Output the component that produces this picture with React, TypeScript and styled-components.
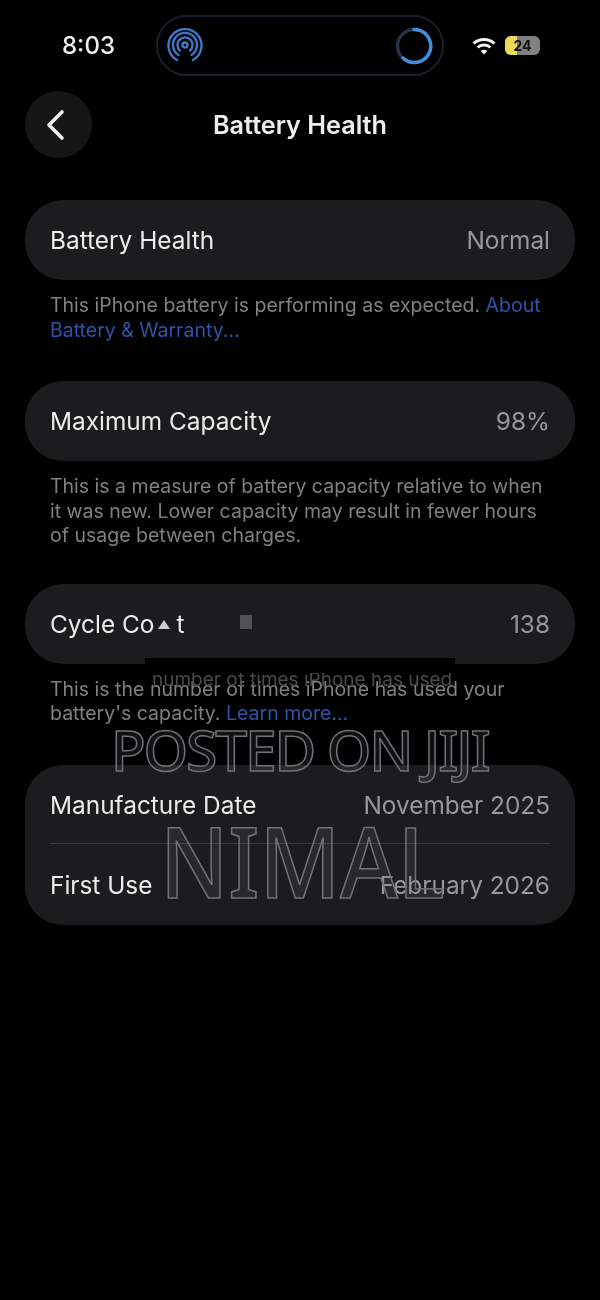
import React from 'react';
import styled, { createGlobalStyle } from 'styled-components';

const GlobalStyle = createGlobalStyle`
  html, body {
    margin: 0;
    padding: 0;
    background: #000;
  }
`;

const Page = styled.div`
  position: relative;
  width: 600px;
  height: 1300px;
  overflow: hidden;
  background: #000;
  font-family: Inter, "Liberation Sans", sans-serif;
  color: #e8e8e8;
  filter: blur(0.7px);
`;

const StatusBar = styled.div`
  display: flex;
  align-items: center;
  height: 61px;
  padding: 15px 0 0 62px;
`;

const Time = styled.div`
  width: 94px;
  font-size: 24px;
  font-weight: 500;
  color: #eee;
`;

const Island = styled.div`
  box-sizing: border-box;
  width: 288px;
  height: 61px;
  border: 2px solid #1b1f2a;
  border-radius: 31px;
  display: flex;
  align-items: center;
  justify-content: space-between;
  padding: 0 9px;
`;

const StatusIcons = styled.div`
  display: flex;
  align-items: center;
  gap: 9px;
  margin-left: 28px;
`;

const Battery = styled.div`
  position: relative;
  width: 35px;
  height: 19px;
  border-radius: 6px;
  overflow: hidden;
  background: #808083;
  display: flex;
  align-items: center;
  justify-content: center;
  font-size: 14px;
  font-weight: 700;
  color: #111;
`;

const BatteryFill = styled.div`
  position: absolute;
  left: 0;
  top: 0;
  bottom: 0;
  width: 12px;
  background: #eeda58;
`;

const BatteryLabel = styled.span`
  position: relative;
`;

const NavBar = styled.div`
  display: flex;
  align-items: center;
  height: 67px;
  margin-top: 15px;
  padding: 0 25px;
`;

const BackButton = styled.div`
  box-sizing: border-box;
  width: 67px;
  height: 67px;
  padding-right: 6px;
  border-radius: 50%;
  background: #161617;
  display: flex;
  align-items: center;
  justify-content: center;
`;

const Title = styled.div`
  flex: 1;
  text-align: center;
  font-size: 25.2px;
  font-weight: 600;
  color: #eee;
  margin-right: 67px;
`;

const Content = styled.div`
  display: flex;
  flex-direction: column;
  padding: 42px 25px 0;
`;

const Card = styled.div<{ $top?: number }>`
  margin-top: ${(p) => p.$top ?? 0}px;
  background: #1c1c1e;
  border-radius: 38px;
  padding: 0 25px;
`;

const Row = styled.div`
  display: flex;
  align-items: center;
  justify-content: space-between;
  height: 80px;
  font-size: 24.4px;
`;

const Label = styled.span`
  color: #ececec;
`;

const Value = styled.span`
  color: #98989c;
`;

const Divider = styled.div`
  height: 1px;
  margin: -2px 0 1px;
  background: #38383a;
`;

const Note = styled.div`
  margin-top: 13px;
  padding: 0 25px;
  font-size: 19.5px;
  line-height: 24.5px;
  color: #808084;
  white-space: nowrap;
`;

const Link = styled.span`
  color: #2f53a8;
`;

const Smudge = styled.span`
  display: inline-block;
  width: 0;
  height: 0;
  margin: 0 6px 4px 4px;
  border-left: 6px solid transparent;
  border-right: 6px solid transparent;
  border-bottom: 9px solid #ccc;
`;

const Speck = styled.span`
  position: absolute;
  left: 240px;
  top: 615px;
  width: 12px;
  height: 14px;
  background: #77777a;
  opacity: 0.6;
`;

const GhostLine = styled.div`
  position: absolute;
  left: 152px;
  top: 668px;
  font-size: 19px;
  line-height: 24px;
  color: #4a4a4e;
  white-space: nowrap;
`;

const Patch = styled.div`
  position: absolute;
  left: 145px;
  top: 658px;
  width: 310px;
  height: 15px;
  background: #000;
`;

const Watermark = styled.div<{ $top: number; $left: number; $size: number; $spacing: number; $stretch: number }>`
  position: absolute;
  top: ${(p) => p.$top}px;
  left: ${(p) => p.$left}px;
  font-family: "Noto Sans", sans-serif;
  font-weight: 500;
  font-size: ${(p) => p.$size}px;
  line-height: 1;
  letter-spacing: ${(p) => p.$spacing}px;
  color: rgba(110, 120, 135, 0.14);
  -webkit-text-stroke: 1.5px #6f7278;
  white-space: nowrap;
  transform: scaleY(${(p) => p.$stretch});
  transform-origin: top left;
`;

const AirDropIcon = () => (
  <svg width="36" height="36" viewBox="0 0 36 36" fill="none" stroke="#3f78c8" strokeWidth="2.4" strokeLinecap="round">
    <path d="M10 32A16.500 16.500 0 1 1 26 32" />
    <path d="M11.500 27A12 12 0 1 1 24.500 27" />
    <path d="M13 22.500A7.500 7.500 0 1 1 23 22.500" />
    <circle cx="18" cy="17" r="2.500" />
  </svg>
);

const ProgressRing = () => (
  <svg width="38" height="38" viewBox="0 0 38 38" fill="none" strokeWidth="3.4">
    <circle cx="19" cy="19" r="16.500" stroke="#2a3344" />
    <path d="M19 2.500A16.500 16.500 0 1 1 8 31" stroke="#3f8fe0" strokeLinecap="round" />
  </svg>
);

const WifiIcon = () => (
  <svg width="24" height="18" viewBox="0 0 24 18" fill="none" stroke="#f2f2f2" strokeWidth="3">
    <path d="M1.500 6.500C7 1 17 1 22.500 6.500" />
    <path d="M5.500 10.500C9 7.200 15 7.200 18.500 10.500" />
    <path d="M12 17.500L8.700 14C10.500 12.400 13.500 12.400 15.300 14Z" fill="#f2f2f2" stroke="none" />
  </svg>
);

const ChevronLeft = () => (
  <svg width="20" height="32" viewBox="0 0 20 32" fill="none" stroke="#f0f0f0" strokeWidth="3.6" strokeLinecap="round" strokeLinejoin="round">
    <path d="M16 3L3 16L16 29" />
  </svg>
);

const App: React.FC = () => {
  return (
    <>
      <GlobalStyle />
      <Page>
        <StatusBar>
          <Time>8:03</Time>
          <Island>
            <AirDropIcon />
            <ProgressRing />
          </Island>
          <StatusIcons>
            <WifiIcon />
            <Battery>
              <BatteryFill />
              <BatteryLabel>24</BatteryLabel>
            </Battery>
          </StatusIcons>
        </StatusBar>

        <NavBar>
          <BackButton>
            <ChevronLeft />
          </BackButton>
          <Title>Battery Health</Title>
        </NavBar>

        <Content>
          <Card>
            <Row>
              <Label>Battery Health</Label>
              <Value>Normal</Value>
            </Row>
          </Card>
          <Note>
            This iPhone battery is performing as expected. <Link>About</Link>
            <br />
            <Link>Battery &amp; Warranty...</Link>
          </Note>

          <Card $top={39}>
            <Row>
              <Label>Maximum Capacity</Label>
              <Value>98%</Value>
            </Row>
          </Card>
          <Note>
            This is a measure of battery capacity relative to when
            <br />
            it was new. Lower capacity may result in fewer hours
            <br />
            of usage between charges.
          </Note>

          <Card $top={36}>
            <Row>
              <Label>
                Cycle Co
                <Smudge />t
              </Label>
              <Value>138</Value>
            </Row>
          </Card>
          <Note>
            This is the number of times iPhone has used your
            <br />
            battery's capacity. <Link>Learn more...</Link>
          </Note>

          <Card $top={39}>
            <Row>
              <Label>Manufacture Date</Label>
              <Value>November 2025</Value>
            </Row>
            <Divider />
            <Row>
              <Label>First Use</Label>
              <Value>February 2026</Value>
            </Row>
          </Card>
        </Content>

        <Speck />
        <GhostLine>number of times iPhone has used</GhostLine>
        <Patch />
        <Watermark $top={721} $left={111} $size={57} $spacing={-2.2} $stretch={1}>POSTED ON JIJI</Watermark>
        <Watermark $top={811} $left={160} $size={88} $spacing={0} $stretch={1.11}>NIMAL</Watermark>
      </Page>
    </>
  );
};

export default App;
